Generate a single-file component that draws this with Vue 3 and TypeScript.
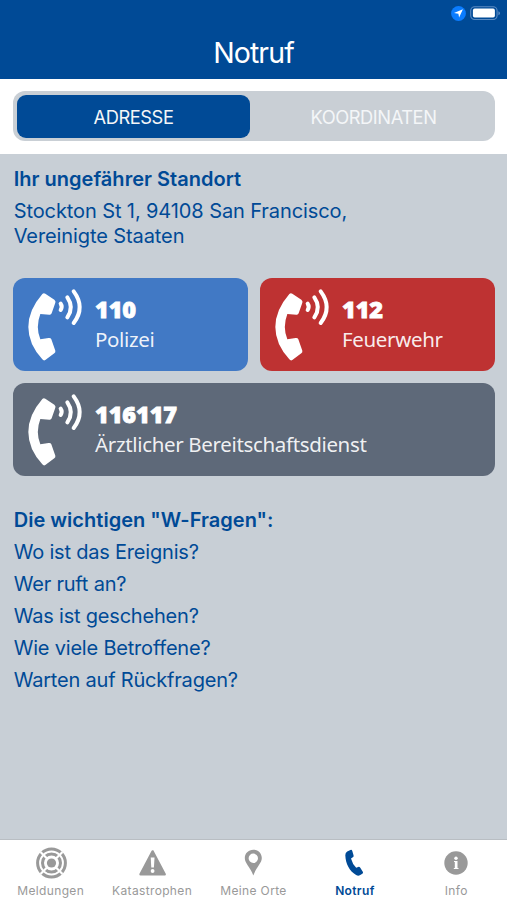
<script setup lang="ts">
import { ref } from 'vue'

type Mode = 'adresse' | 'koordinaten'

interface Contact {
  number: string
  label: string
  kind: string
}

interface Tab {
  id: string
  label: string
}

const mode = ref<Mode>('adresse')
const activeTab = ref('notruf')

const contacts: Contact[] = [
  { number: '110', label: 'Polizei', kind: 'police' },
  { number: '112', label: 'Feuerwehr', kind: 'fire' },
  { number: '116117', label: 'Ärztlicher Bereitschaftsdienst', kind: 'medical' },
]

const questions: string[] = [
  'Wo ist das Ereignis?',
  'Wer ruft an?',
  'Was ist geschehen?',
  'Wie viele Betroffene?',
  'Warten auf Rückfragen?',
]

const tabs: Tab[] = [
  { id: 'meldungen', label: 'Meldungen' },
  { id: 'katastrophen', label: 'Katastrophen' },
  { id: 'orte', label: 'Meine Orte' },
  { id: 'notruf', label: 'Notruf' },
  { id: 'info', label: 'Info' },
]
</script>

<template>
  <div class="screen">
    <header class="header">
      <div class="status">
        <svg class="location" viewBox="0 0 15 15">
          <circle cx="7.5" cy="7.5" r="7.4" fill="#0a7cff" />
          <path d="M11.9 3.2 8.1 11.6 7.4 7.8 3 7.1Z" fill="#fff" />
        </svg>
        <svg class="battery" viewBox="0 0 31 15">
          <rect x="0.7" y="0.7" width="26.4" height="12.8" rx="4" fill="none" stroke="#5b8bc2" stroke-width="1.1" />
          <rect x="2.9" y="2.6" width="22" height="9" rx="1.8" fill="#fff" />
          <path d="M28.4 5.2q1.6.6 1.6 2t-1.6 2Z" fill="#5b8bc2" />
        </svg>
      </div>
      <h1 class="title">Notruf</h1>
    </header>

    <div class="switcher">
      <div class="segments">
        <button class="segment" :class="{ selected: mode === 'adresse' }" @click="mode = 'adresse'">
          <span>ADRESSE</span>
        </button>
        <button class="segment" :class="{ selected: mode === 'koordinaten' }" @click="mode = 'koordinaten'">
          <span>KOORDINATEN</span>
        </button>
      </div>
    </div>

    <main class="content">
      <section class="place">
        <h2 class="heading">Ihr ungefährer Standort</h2>
        <p class="address">Stockton St 1, 94108 San Francisco,<br />Vereinigte Staaten</p>
      </section>

      <section class="contacts">
        <button v-for="c in contacts" :key="c.number" class="contact" :class="c.kind">
          <svg class="handset" viewBox="0 0 240 279">
            <path
              d="M88 48Q92 44 97 47L124 65Q129 69 127 74L116 106Q114 111 109 110L82 108Q67 147 82 184L107 180Q113 179 115 184L127 218Q128 223 124 226L97 246Q92 249 88 244Q46 198 46 147T88 48Z"
              fill="#fff"
            />
            <g fill="none" stroke="#fff" stroke-width="12" stroke-linecap="round">
              <path d="M143 77q6 9 0 19" />
              <path d="M163 58q21 30 0 60" />
              <path d="M182 40q36 48 0 95" />
            </g>
          </svg>
          <span class="contact-text">
            <strong>{{ c.number }}</strong>
            <span>{{ c.label }}</span>
          </span>
        </button>
      </section>

      <section class="questions">
        <h2 class="heading">Die wichtigen "W-Fragen":</h2>
        <ul>
          <li v-for="q in questions" :key="q">{{ q }}</li>
        </ul>
      </section>
    </main>

    <nav class="tabs">
      <button
        v-for="t in tabs"
        :key="t.id"
        class="tab"
        :class="{ active: activeTab === t.id }"
        @click="activeTab = t.id"
      >
        <svg class="tab-icon" viewBox="0 0 34 34">
          <g v-if="t.id === 'meldungen'">
            <g fill="none" stroke="currentColor">
              <circle cx="17.5" cy="17" r="9" stroke-width="3" />
              <circle cx="17.5" cy="17" r="13.9" stroke-width="3" />
            </g>
            <path d="M6.5 6 28.5 28M28.5 6 6.5 28" stroke="#fff" stroke-width="2.2" />
            <circle cx="17.5" cy="17" r="6.2" fill="#fff" />
            <circle cx="17.5" cy="17" r="4.6" fill="currentColor" />
          </g>
          <g v-else-if="t.id === 'katastrophen'">
            <path d="M17.6 5.5 29.6 28.3H5.6Z" fill="currentColor" stroke="currentColor" stroke-width="2.6" stroke-linejoin="round" />
            <path d="M15.7 11.5h3.8l-.6 10h-2.6Z" fill="#fff" />
            <circle cx="17.6" cy="25" r="1.9" fill="#fff" />
          </g>
          <path
            v-else-if="t.id === 'orte'"
            fill="currentColor"
            fill-rule="evenodd"
            d="M17.3 3.8c-4.9 0-8.5 3.6-8.5 8.3 0 5.2 5.2 8.7 8.5 17.4 3.3-8.7 8.5-12.2 8.5-17.4 0-4.7-3.6-8.3-8.5-8.3Zm0 3.8a4.7 4.7 0 1 1 0 9.4 4.7 4.7 0 0 1 0-9.4Z"
          />
          <path
            v-else-if="t.id === 'notruf'"
            fill="currentColor"
            d="M9.2 5.4 12.4 4Q13.8 3.5 14.3 4.9L15.6 9.4Q15.8 10.7 14.8 11.3L13 12.5Q14.4 18 18.2 21.8L20.1 21Q21.4 20.5 22.1 21.5L24.8 25.7Q25.5 26.8 24.4 27.7L21.8 29.3Q20.1 30.1 18.1 29C11.3 25 7.7 18 7.3 9.3Q7.3 6.4 9.2 5.4Z"
          />
          <g v-else>
            <circle cx="17" cy="17" r="11.7" fill="currentColor" />
            <circle cx="17" cy="12.2" r="1.7" fill="#fff" />
            <path d="M15 15h3.5v6.9h1v1.1H14.8v-1.1h1v-5.8H15Z" fill="#fff" />
          </g>
        </svg>
        <span class="tab-label">{{ t.label }}</span>
      </button>
    </nav>
  </div>
</template>

<style>
body {
  margin: 0;
}
</style>

<style scoped>
.screen {
  width: 507px;
  height: 900px;
  display: flex;
  flex-direction: column;
  overflow: hidden;
  background: #c8cfd6;
  color: #004a96;
  font-family: Inter, 'Liberation Sans', sans-serif;
}
button {
  border: 0;
  padding: 0;
  margin: 0;
  background: none;
  color: inherit;
  font: inherit;
}
h1,
h2,
p,
ul {
  margin: 0;
  padding: 0;
  font-weight: 400;
}
.header {
  height: 79px;
  flex: none;
  background: #004a96;
  color: #fff;
}
.status {
  display: flex;
  justify-content: flex-end;
  gap: 4px;
  height: 21px;
  padding: 6px 6px 0 0;
  box-sizing: border-box;
}
.location {
  width: 15px;
  height: 15px;
}
.battery {
  width: 31px;
  height: 15px;
}
.title {
  font-size: 28.5px;
  line-height: 64px;
  text-align: center;
  letter-spacing: -0.9px;
}
.switcher {
  height: 75px;
  flex: none;
  box-sizing: border-box;
  padding: 12px 12px 0 13px;
  background: #fff;
}
.segments {
  display: grid;
  grid-template-columns: 233px 1fr;
  height: 50px;
  box-sizing: border-box;
  padding: 4px;
  border-radius: 12px;
  background: #c9cfd5;
}
.segment {
  border-radius: 9px;
  padding-top: 1px;
  font-size: 18.3px;
  line-height: 42px;
  letter-spacing: -0.45px;
  color: #f4f6f8;
}
.segment:last-child {
  padding-left: 6px;
}
.segment.selected {
  background: #004a96;
}
.content {
  flex: 1;
  padding: 0 12px 0 13px;
}
.place {
  height: 124px;
  padding: 12px 0 0 0.7px;
  box-sizing: border-box;
}
.heading {
  font-size: 20px;
  font-weight: 600;
  line-height: 26px;
  letter-spacing: 0.02px;
}
.address {
  margin-top: 7px;
  font-size: 20px;
  line-height: 24.5px;
  letter-spacing: -0.1px;
  white-space: nowrap;
}
.contacts {
  display: grid;
  grid-template-columns: 1fr 1fr;
  gap: 12px;
}
.contact {
  height: 93px;
  display: flex;
  border-radius: 12px;
  color: #fff;
  text-align: left;
}
.police {
  background: #4179c5;
}
.fire {
  background: #be3232;
}
.medical {
  grid-column: span 2;
  background: #5e6979;
}
.handset {
  width: 80px;
  height: 93px;
}
.contact-text {
  display: flex;
  flex-direction: column;
  margin-left: 2px;
  padding-top: 17px;
  font-family: 'Noto Sans', sans-serif;
  font-size: 20.5px;
  font-weight: 400;
  line-height: 30px;
  letter-spacing: -0.34px;
  white-space: nowrap;
  color: rgba(255, 255, 255, 0.92);
}
.contact-text strong {
  font-size: 23.5px;
  font-weight: 900;
  line-height: 29px;
  letter-spacing: -0.1px;
  color: #fff;
  -webkit-text-stroke: 0.8px #fff;
}
.questions {
  padding: 31px 0 0 0.7px;
}
.questions ul {
  margin-top: 3px;
  list-style: none;
  font-size: 20px;
  line-height: 32.1px;
  letter-spacing: -0.2px;
}
.tabs {
  display: grid;
  grid-template-columns: repeat(5, 1fr);
  height: 61px;
  flex: none;
  box-sizing: border-box;
  border-top: 1px solid #b9bec3;
  background: #fff;
  color: #999;
}
.tab {
  display: flex;
  flex-direction: column;
  align-items: center;
  padding-top: 6px;
}
.tab.active {
  color: #004a96;
}
.tab-icon {
  width: 34px;
  height: 34px;
  flex: none;
}
.tab-label {
  font-size: 12px;
  line-height: 16px;
  margin-top: 3px;
  letter-spacing: 0.35px;
  white-space: nowrap;
}
.active .tab-label {
  font-weight: 600;
}
</style>
